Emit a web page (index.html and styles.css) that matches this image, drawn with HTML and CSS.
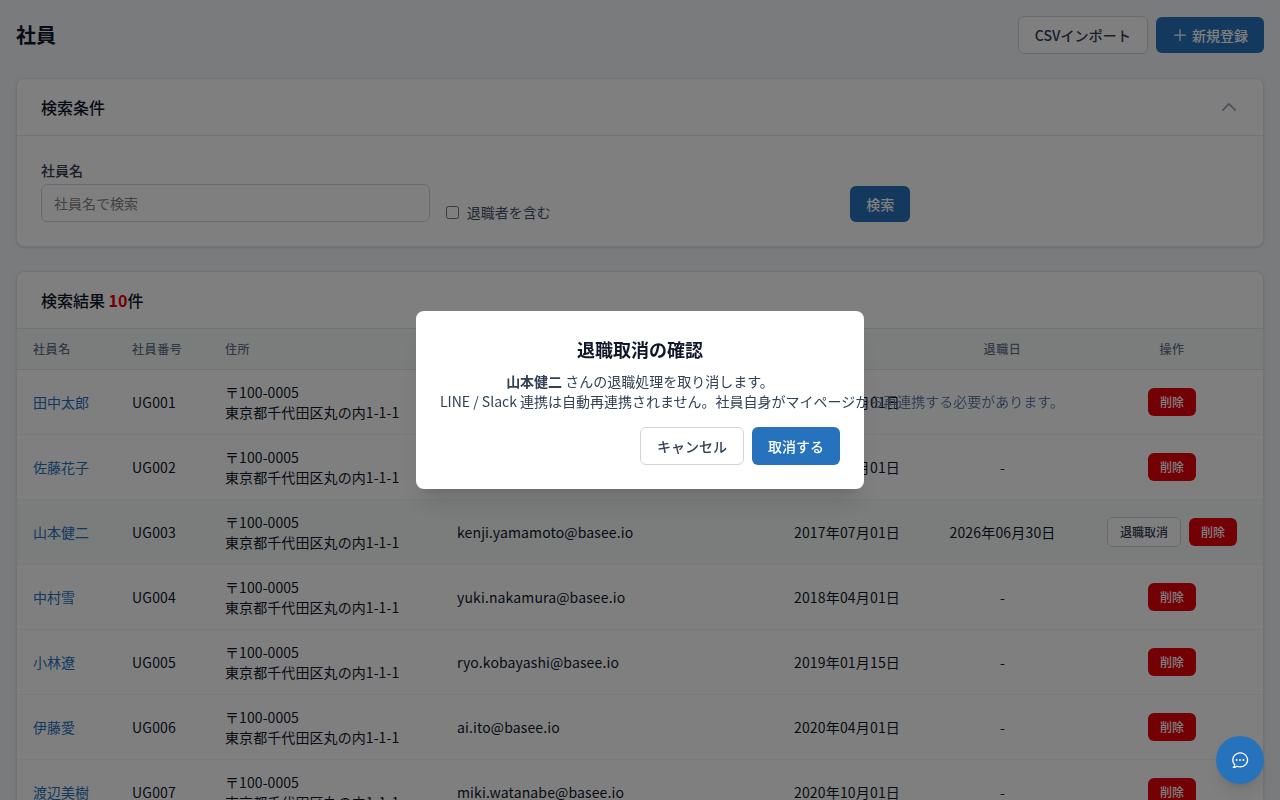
FILE: index.html
```html
<!DOCTYPE html>
<html lang="ja">
<head>
    <meta charset="UTF-8">
    <meta name="viewport" content="width=device-width, initial-scale=1.0">
    <title>社員</title>
    <link rel="stylesheet" href="styles.css">
</head>
<body>
    <main class="page">
        <div class="page-header">
            <h1>社員</h1>
            <div class="actions">
                <button class="btn btn-outline btn-csv">CSVインポート</button>
                <button class="btn btn-primary">
                    <svg class="icon" viewBox="0 0 16 16" fill="none" stroke="currentColor" stroke-width="1.25" stroke-linecap="round"><path d="M8 2.5v11M2.5 8h11"/></svg>
                    新規登録
                </button>
            </div>
        </div>

        <section class="card">
            <div class="card-header">
                <h2>検索条件</h2>
                <svg class="chevron" viewBox="0 0 24 24" fill="none" stroke="currentColor" stroke-width="2" stroke-linecap="round" stroke-linejoin="round"><path d="m4.5 15.75 7.5-7.5 7.5 7.5"/></svg>
            </div>
            <form class="search-form">
                <div class="field">
                    <label for="name">社員名</label>
                    <input type="text" id="name" placeholder="社員名で検索">
                </div>
                <label class="check">
                    <input type="checkbox">
                    退職者を含む
                </label>
                <div><button type="button" class="btn btn-primary">検索</button></div>
            </form>
        </section>

        <section class="card">
            <div class="card-header">
                <h2>検索結果 <span class="count">10</span>件</h2>
            </div>
            <table>
                <colgroup>
                    <col class="col-name">
                    <col class="col-code">
                    <col class="col-address">
                    <col class="col-mail">
                    <col class="col-joined">
                    <col class="col-retired">
                    <col class="col-ops">
                </colgroup>
                <thead>
                    <tr>
                        <th>社員名</th>
                        <th>社員番号</th>
                        <th>住所</th>
                        <th>メールアドレス</th>
                        <th class="center">入社日</th>
                        <th class="center">退職日</th>
                        <th class="center">操作</th>
                    </tr>
                </thead>
                <tbody>
                    <tr>
                        <td><a href="#">田中太郎</a></td>
                        <td class="code">UG001</td>
                        <td class="address">〒100-0005<br>東京都千代田区丸の内1-1-1</td>
                        <td class="mail">taro.tanaka@basee.io</td>
                        <td class="center date">2015年04月01日</td>
                        <td class="center date">-</td>
                        <td><div class="ops"><button class="btn btn-sm btn-danger">削除</button></div></td>
                    </tr>
                    <tr>
                        <td><a href="#">佐藤花子</a></td>
                        <td class="code">UG002</td>
                        <td class="address">〒100-0005<br>東京都千代田区丸の内1-1-1</td>
                        <td class="mail">hanako.sato@basee.io</td>
                        <td class="center date">2016年04月01日</td>
                        <td class="center date">-</td>
                        <td><div class="ops"><button class="btn btn-sm btn-danger">削除</button></div></td>
                    </tr>
                    <tr class="retired">
                        <td><a href="#">山本健二</a></td>
                        <td class="code">UG003</td>
                        <td class="address">〒100-0005<br>東京都千代田区丸の内1-1-1</td>
                        <td class="mail">kenji.yamamoto@basee.io</td>
                        <td class="center date">2017年07月01日</td>
                        <td class="center date">2026年06月30日</td>
                        <td>
                            <div class="ops">
                                <button class="btn btn-sm btn-outline">退職取消</button>
                                <button class="btn btn-sm btn-danger">削除</button>
                            </div>
                        </td>
                    </tr>
                    <tr>
                        <td><a href="#">中村雪</a></td>
                        <td class="code">UG004</td>
                        <td class="address">〒100-0005<br>東京都千代田区丸の内1-1-1</td>
                        <td class="mail">yuki.nakamura@basee.io</td>
                        <td class="center date">2018年04月01日</td>
                        <td class="center date">-</td>
                        <td><div class="ops"><button class="btn btn-sm btn-danger">削除</button></div></td>
                    </tr>
                    <tr>
                        <td><a href="#">小林遼</a></td>
                        <td class="code">UG005</td>
                        <td class="address">〒100-0005<br>東京都千代田区丸の内1-1-1</td>
                        <td class="mail">ryo.kobayashi@basee.io</td>
                        <td class="center date">2019年01月15日</td>
                        <td class="center date">-</td>
                        <td><div class="ops"><button class="btn btn-sm btn-danger">削除</button></div></td>
                    </tr>
                    <tr>
                        <td><a href="#">伊藤愛</a></td>
                        <td class="code">UG006</td>
                        <td class="address">〒100-0005<br>東京都千代田区丸の内1-1-1</td>
                        <td class="mail">ai.ito@basee.io</td>
                        <td class="center date">2020年04月01日</td>
                        <td class="center date">-</td>
                        <td><div class="ops"><button class="btn btn-sm btn-danger">削除</button></div></td>
                    </tr>
                    <tr>
                        <td><a href="#">渡辺美樹</a></td>
                        <td class="code">UG007</td>
                        <td class="address">〒100-0005<br>東京都千代田区丸の内1-1-1</td>
                        <td class="mail">miki.watanabe@basee.io</td>
                        <td class="center date">2020年10月01日</td>
                        <td class="center date">-</td>
                        <td><div class="ops"><button class="btn btn-sm btn-danger">削除</button></div></td>
                    </tr>
                </tbody>
            </table>
        </section>
    </main>

    <div class="overlay">
        <div class="dialog" role="dialog" aria-modal="true">
            <h3>退職取消の確認</h3>
            <p><strong>山本健二</strong> さんの退職処理を取り消します。<br>LINE / Slack 連携は自動再連携されません。社員自身がマイページから再連携する必要があります。</p>
            <div class="dialog-actions">
                <button class="btn btn-outline">キャンセル</button>
                <button class="btn btn-primary">取消する</button>
            </div>
        </div>
    </div>

    <button class="chat" aria-label="チャット">
        <svg viewBox="0 0 20 20" fill="none">
            <path d="M4.7 14.6A7.4 7 0 1 1 10 16.9C8.9 16.9 7.9 16.7 7 16.3C6 17.1 4.6 17.6 3.2 17.4C4.2 16.7 4.8 15.7 4.7 14.6Z" stroke="currentColor" stroke-width="1.25" stroke-linejoin="round"/>
            <circle cx="6.6" cy="10" r="0.95" fill="currentColor"/>
            <circle cx="10" cy="10" r="0.95" fill="currentColor"/>
            <circle cx="13.4" cy="10" r="0.95" fill="currentColor"/>
        </svg>
    </button>
</body>
</html>
```

FILE: styles.css
```css
* {
    box-sizing: border-box;
}
body {
    margin: 0;
    height: 100vh;
    overflow: hidden;
    font-family: "Noto Sans CJK JP", sans-serif;
    font-size: 14px;
    line-height: 20px;
    color: #0f172a;
    background: #f5f7fa;
}
h1, h2, h3, p {
    margin: 0;
}
.page {
    display: flex;
    flex-direction: column;
    gap: 24px;
    padding: 16px;
}
.page-header {
    display: flex;
    justify-content: space-between;
    align-items: center;
}
h1 {
    font-size: 20px;
    line-height: 28px;
}
.actions {
    display: flex;
    align-items: center;
    gap: 8px;
}
.btn {
    display: inline-flex;
    align-items: center;
    justify-content: center;
    gap: 4px;
    padding: 8px 16px;
    border: none;
    border-radius: 6px;
    font-family: inherit;
    font-size: 14px;
    font-weight: 500;
    line-height: 20px;
    white-space: nowrap;
    cursor: pointer;
}
.btn-primary {
    background: #2672bc;
    color: white;
}
.btn-outline {
    background: white;
    border: 1px solid #d1d5db;
    color: #334155;
}
.btn-csv {
    letter-spacing: 0.1px;
}
.btn-danger {
    background: #e7000b;
    color: white;
}
.btn-sm {
    padding: 6px 12px;
    font-size: 12px;
    line-height: 16px;
}
.icon {
    width: 16px;
    height: 16px;
}
.card {
    background: white;
    border: 1px solid #e5e7eb;
    border-radius: 8px;
    box-shadow: 0 1px 3px rgba(0,0,0,0.1), 0 1px 2px -1px rgba(0,0,0,0.1);
}
.card-header {
    display: flex;
    justify-content: space-between;
    align-items: center;
    padding: 16px 24px;
    border-bottom: 1px solid #e5e7eb;
}
h2 {
    font-size: 16px;
    font-weight: 500;
    line-height: 24px;
}
.count {
    font-weight: 700;
    color: #e7000b;
}
.chevron {
    width: 20px;
    height: 20px;
    color: #94a3b8;
}
.search-form {
    display: grid;
    grid-template-columns: repeat(3, 1fr);
    gap: 16px;
    align-items: end;
    padding: 24px;
}
.field label {
    display: block;
    margin-bottom: 4px;
    font-weight: 500;
    color: #334155;
}
.field input {
    display: block;
    width: 100%;
    height: 38px;
    padding: 8px 12px;
    border: 1px solid #d1d5db;
    border-radius: 6px;
    font: inherit;
}
.field input::placeholder {
    color: #858585;
}
.search-form .btn {
    display: flex;
}
.check {
    display: flex;
    align-items: center;
    gap: 8px;
    color: #475569;
}
.check input {
    width: 13px;
    height: 13px;
    margin: 0;
}
table {
    width: 100%;
    table-layout: fixed;
    border-collapse: separate;
    border-spacing: 0;
}
.col-name { width: 99px; }
.col-code { width: 93px; }
.col-address { width: 232px; }
.col-mail { width: 329px; }
.col-joined { width: 154px; }
.col-retired { width: 157px; }
th {
    padding: 12px 16px;
    font-size: 12px;
    font-weight: 500;
    line-height: 16px;
    letter-spacing: 0.6px;
    text-align: left;
    color: #64748b;
    background: #f7faf9;
    border-bottom: 1px solid #e5e7eb;
}
td {
    height: 65px;
    padding: 12px 16px;
    border-bottom: 1px solid #f3f4f6;
    white-space: nowrap;
}
td a {
    color: #2672bc;
    text-decoration: none;
}
.retired td {
    background: #f7faf9;
}
.center {
    text-align: center;
}
.code {
    letter-spacing: 0.2px;
}
.address {
    letter-spacing: 0.08px;
}
.mail {
    letter-spacing: 0.13px;
}
.date {
    letter-spacing: 0.17px;
}
.ops {
    display: flex;
    justify-content: center;
    align-items: center;
    gap: 8px;
}
.overlay {
    position: fixed;
    inset: 0;
    display: flex;
    align-items: center;
    justify-content: center;
    background: rgba(0,0,0,0.5);
}
.dialog {
    width: 448px;
    padding: 24px;
    background: white;
    border-radius: 8px;
    box-shadow: 0 20px 25px -5px rgba(0,0,0,0.1), 0 8px 10px -6px rgba(0,0,0,0.1);
    text-align: center;
}
.dialog h3 {
    margin-bottom: 8px;
    font-size: 18px;
    line-height: 28px;
}
.dialog p {
    color: #334155;
    white-space: nowrap;
}
.dialog-actions {
    display: flex;
    justify-content: flex-end;
    gap: 8px;
    margin-top: 16px;
}
.chat {
    position: fixed;
    right: 16px;
    bottom: 16px;
    display: flex;
    align-items: center;
    justify-content: center;
    width: 48px;
    height: 48px;
    padding: 0;
    border: none;
    border-radius: 50%;
    background: #2672bc;
    color: white;
    box-shadow: 0 10px 15px -3px rgba(0,0,0,0.1), 0 4px 6px -4px rgba(0,0,0,0.1);
}
.chat svg {
    width: 20px;
    height: 20px;
}
```
